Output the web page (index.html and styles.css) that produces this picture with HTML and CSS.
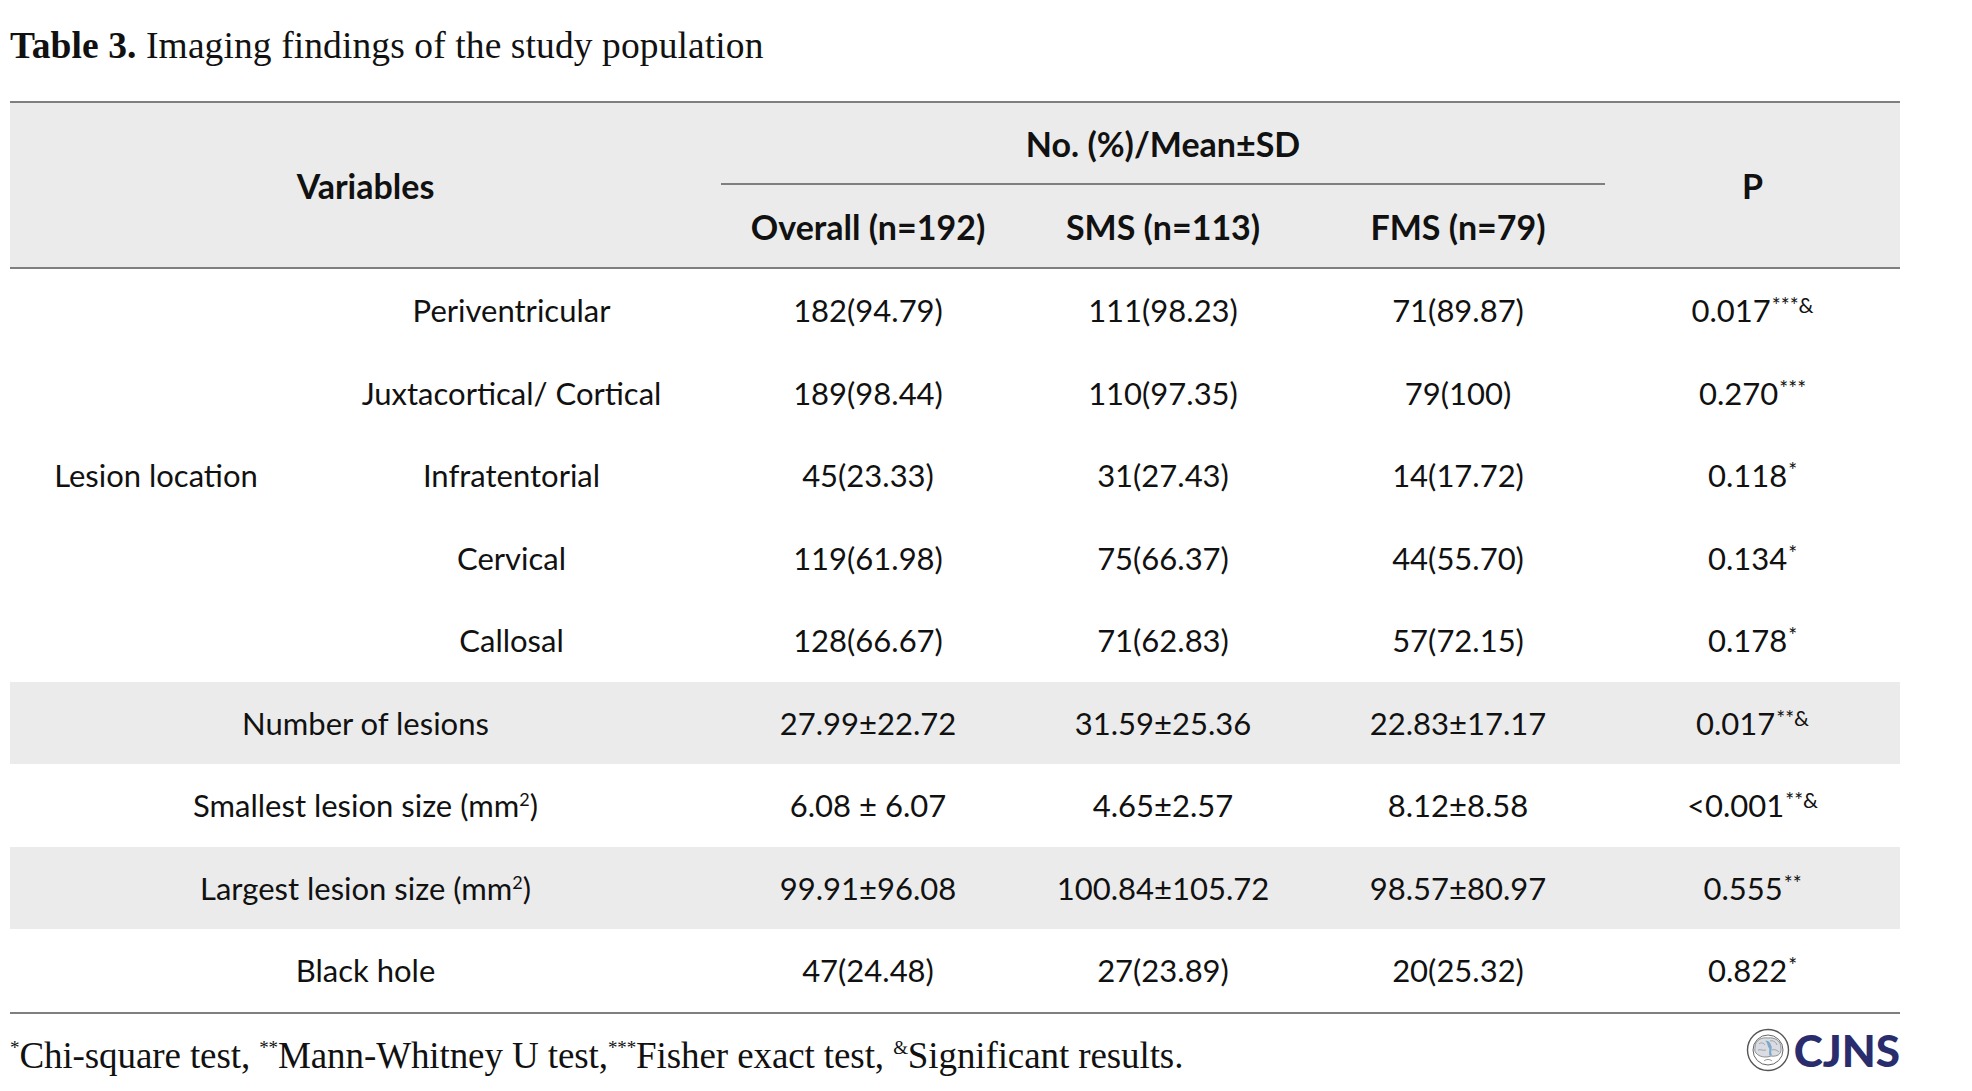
FILE: index.html
```html
<!DOCTYPE html>
<html>
<head>
<meta charset="utf-8">
<link rel="stylesheet" href="styles.css">
</head>
<body>
<div class="page">
  <div class="title"><b>Table 3.</b> Imaging findings of the study population</div>
  <table class="data">
    <colgroup>
      <col class="c-a"><col class="c-b"><col class="c-n"><col class="c-n2"><col class="c-n"><col class="c-p">
    </colgroup>
    <thead>
      <tr class="h1">
        <th colspan="2" rowspan="2">Variables</th>
        <th colspan="3" class="group">No. (%)/Mean±SD</th>
        <th rowspan="2">P</th>
      </tr>
      <tr class="h2">
        <th>Overall (n=192)</th>
        <th>SMS (n=113)</th>
        <th>FMS (n=79)</th>
      </tr>
    </thead>
    <tbody>
      <tr>
        <td rowspan="5">Lesion location</td>
        <td>Periventricular</td><td>182(94.79)</td><td>111(98.23)</td><td>71(89.87)</td><td>0.017<sup>***&amp;</sup></td>
      </tr>
      <tr><td>Juxtacortical/ Cortical</td><td>189(98.44)</td><td>110(97.35)</td><td>79(100)</td><td>0.270<sup>***</sup></td></tr>
      <tr><td>Infratentorial</td><td>45(23.33)</td><td>31(27.43)</td><td>14(17.72)</td><td>0.118<sup>*</sup></td></tr>
      <tr><td>Cervical</td><td>119(61.98)</td><td>75(66.37)</td><td>44(55.70)</td><td>0.134<sup>*</sup></td></tr>
      <tr><td>Callosal</td><td>128(66.67)</td><td>71(62.83)</td><td>57(72.15)</td><td>0.178<sup>*</sup></td></tr>
      <tr class="shade"><td colspan="2">Number of lesions</td><td>27.99±22.72</td><td>31.59±25.36</td><td>22.83±17.17</td><td>0.017<sup>**&amp;</sup></td></tr>
      <tr><td colspan="2">Smallest lesion size (mm<sup class="sq">2</sup>)</td><td>6.08 ± 6.07</td><td>4.65±2.57</td><td>8.12±8.58</td><td>&lt;0.001<sup>**&amp;</sup></td></tr>
      <tr class="shade"><td colspan="2">Largest lesion size (mm<sup class="sq">2</sup>)</td><td>99.91±96.08</td><td>100.84±105.72</td><td>98.57±80.97</td><td>0.555<sup>**</sup></td></tr>
      <tr class="last"><td colspan="2">Black hole</td><td>47(24.48)</td><td>27(23.89)</td><td>20(25.32)</td><td>0.822<sup>*</sup></td></tr>
    </tbody>
  </table>
  <div class="foot">
    <div class="note"><sup>*</sup>Chi-square test, <sup>**</sup>Mann-Whitney U test,<sup>***</sup>Fisher exact test, <sup>&amp;</sup>Significant results.</div>
    <div class="logo">
      <svg class="emblem" width="44" height="44" viewBox="0 0 44 44">
        <circle cx="22" cy="22" r="20.5" fill="#fff" stroke="#555" stroke-width="1.4"/>
        <circle cx="22" cy="22" r="15" fill="#fff" stroke="#666" stroke-width="1"/>
        <path d="M9 19 C9 12 16 9 22 10 C29 9 35 13 35 20 C36 26 31 29 25 28 C20 30 13 29 10 25 C8 23 9 21 9 19 Z" fill="#d9dde3" stroke="#777" stroke-width="0.8"/>
        <path d="M13 16 C15 14 18 15 19 17 M24 13 C27 12 30 14 31 17 M12 22 C15 21 17 23 20 22 M26 22 C28 21 31 22 33 24" fill="none" stroke="#888" stroke-width="0.7"/>
        <path d="M19 13 C22 14 21 18 23 20 C24 23 22 26 24 28 L26 27 C24 24 27 20 25 17 C24 14 22 12 19 13 Z" fill="#7fa7c9"/>
        <path d="M18 33 C20 31 24 31 26 33" fill="none" stroke="#777" stroke-width="0.8"/>
      </svg>
      <span class="brand">CJNS</span>
    </div>
  </div>
</div>
</body>
</html>
```

FILE: styles.css
```css
html, body {
  margin: 0;
  padding: 0;
  background: #ffffff;
}
.page {
  padding: 24px 0 0 10px;
  width: 1890px;
}
.title {
  font-family: "Liberation Serif", "Times New Roman", serif;
  font-size: 37.5px;
  line-height: 44px;
  color: #111;
  letter-spacing: 0.1px;
}
.title b {
  font-weight: bold;
}
.data {
  margin-top: 33px;
  width: 1890px;
  border-collapse: collapse;
  table-layout: fixed;
  font-family: Lato, "Open Sans", sans-serif;
  font-size: 31px;
  color: #111;
}
.c-a { width: 292px; }
.c-b { width: 419px; }
.c-n { width: 294px; }
.c-n2 { width: 296px; }
.c-p { width: 295px; }
.data th, .data td {
  padding: 0;
  text-align: center;
  vertical-align: middle;
}
.data thead {
  background: #ebebeb;
}
.data th {
  font-size: 34px;
}
.data thead tr.h1 {
  border-top: 2px solid #7f7f7f;
}
.data thead tr.h1 th {
  height: 80px;
  font-weight: bold;
  padding-top: 0;
}
.data thead tr.h2 th {
  height: 82px;
  font-weight: bold;
}
.data thead tr.h2 {
  border-bottom: 2px solid #7f7f7f;
}
.data th.group {
  border-bottom: 2px solid #7f7f7f;
}
.data tbody td {
  height: 82.5px;
}
.data tbody tr.shade td {
  background: #ebebeb;
}
.data tbody tr.last {
  border-bottom: 2px solid #7f7f7f;
}
.data sup {
  font-size: 21px;
  line-height: 1;
  vertical-align: top;
  position: relative;
  top: 3px;
  margin-left: 1px;
}
.data sup.sq {
  font-size: 18px;
  margin-left: 0;
  top: 4px;
}
.foot {
  display: flex;
  align-items: center;
  justify-content: space-between;
  margin-top: 20px;
}
.note {
  font-family: "Liberation Serif", "Times New Roman", serif;
  font-size: 37px;
  color: #111;
  letter-spacing: -0.1px;
}
.note sup {
  font-size: 19px;
  line-height: 1;
  vertical-align: top;
  position: relative;
  top: 4px;
}
.logo {
  display: flex;
  align-items: center;
  gap: 4px;
  position: relative;
  top: -6px;
}
.emblem {
  display: block;
}
.brand {
  font-family: Lato, "Open Sans", sans-serif;
  font-weight: 900;
  font-size: 44px;
  color: #2a2d6d;
  letter-spacing: 0px;
  line-height: 44px;
}
```
